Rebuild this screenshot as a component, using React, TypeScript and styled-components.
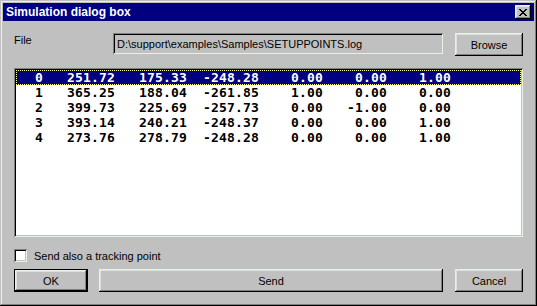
import styled, { createGlobalStyle, css } from 'styled-components'

const HL = '#e4f4e4'

const GlobalStyle = createGlobalStyle`
	html, body {
		margin: 0;
		padding: 0;
		background: #c0c0c0;
	}
	body {
		font-family: "Liberation Sans", Arial, sans-serif;
		font-size: 11px;
		color: #000;
	}
`

const raised = css`
	box-shadow: inset -1px -1px #000, inset 1px 1px ${HL}, inset -2px -2px #808080,
		inset 2px 2px #dfdfdf;
`

const sunken = css`
	box-shadow: inset 1px 1px #808080, inset -1px -1px ${HL}, inset 2px 2px #000,
		inset -2px -2px #c0c0c0;
`

const Window = styled.div`
	width: 537px;
	height: 306px;
	box-sizing: border-box;
	padding: 3px;
	background: #c0c0c0;
	display: flex;
	flex-direction: column;
	box-shadow: inset -1px -1px #000, inset 1px 1px #c0c0c0, inset -2px -2px #808080,
		inset 2px 2px ${HL};
`

const TitleBar = styled.div`
	height: 18px;
	background: #000080;
	display: flex;
	align-items: center;
	justify-content: space-between;
	padding: 0 3px;
`

const Title = styled.span`
	color: #fff;
	font-weight: bold;
	font-size: 12px;
`

const CloseButton = styled.div`
	width: 16px;
	height: 14px;
	background: #c0c0c0;
	display: flex;
	align-items: center;
	justify-content: center;
	${raised}
`

const Body = styled.div`
	flex: 1;
	display: flex;
	flex-direction: column;
	padding: 12px 11px 11px 11px;
`

const FileRow = styled.div`
	display: flex;
	align-items: flex-start;
	height: 23px;
`

const Label = styled.div`
	width: 99px;
	padding-top: 1px;
`

const TextBox = styled.div`
	width: 330px;
	height: 21px;
	box-sizing: border-box;
	padding: 0 4px;
	display: flex;
	align-items: center;
	background: #c0c0c0;
	white-space: nowrap;
	${sunken}
`

const Button = styled.div<{ $w: number; $default?: boolean }>`
	width: ${(p) => p.$w}px;
	height: 23px;
	box-sizing: border-box;
	display: flex;
	align-items: center;
	justify-content: center;
	background: #c0c0c0;
	${raised}
	${(p) =>
		p.$default &&
		css`
			box-shadow: inset 0 0 0 1px #000, inset -2px -2px #000, inset 2px 2px ${HL},
				inset -3px -3px #808080, inset 3px 3px #dfdfdf;
		`}
`

const Browse = styled(Button)`
	margin-left: 12px;
`

const ListBox = styled.div`
	margin-top: 12px;
	height: 169px;
	box-sizing: border-box;
	padding: 2px;
	background: #fff;
	${sunken}
`

const Row = styled.div<{ $selected?: boolean }>`
	display: flex;
	height: 15px;
	line-height: 15px;
	padding-left: 19px;
	font-family: "DejaVu Sans Mono", "Liberation Mono", monospace;
	font-weight: bold;
	font-size: 13px;
	letter-spacing: 0.17px;
	color: #000;
	${(p) =>
		p.$selected &&
		css`
			background: #000080;
			color: #fff;
			outline: 1px dotted #ffff90;
			outline-offset: -1px;
		`}
`

const Cell = styled.span<{ $w: number }>`
	width: ${(p) => p.$w}px;
	text-align: right;
	white-space: pre;
`

const CheckRow = styled.div`
	margin-top: 12px;
	height: 13px;
	display: flex;
	align-items: center;
	gap: 7px;
`

const CheckBox = styled.div`
	width: 13px;
	height: 13px;
	box-sizing: border-box;
	background: #fff;
	${sunken}
`

const ButtonRow = styled.div`
	margin-top: 7px;
	display: flex;
	gap: 11px;
`

const CancelButton = styled(Button)`
	margin-left: 1px;
`

const widths = [8, 72, 72, 72, 64, 64, 64]

const rows = [
	['0', '251.72', '175.33', '-248.28', '0.00', '0.00', '1.00'],
	['1', '365.25', '188.04', '-261.85', '1.00', '0.00', '0.00'],
	['2', '399.73', '225.69', '-257.73', '0.00', '-1.00', '0.00'],
	['3', '393.14', '240.21', '-248.37', '0.00', '0.00', '1.00'],
	['4', '273.76', '278.79', '-248.28', '0.00', '0.00', '1.00'],
]

export default function App() {
	return (
		<>
			<GlobalStyle />
			<Window>
				<TitleBar>
					<Title>Simulation dialog box</Title>
					<CloseButton>
						<svg width="8" height="7" viewBox="0 0 8 7" shapeRendering="crispEdges">
							<path
								d="M0 0h2v1h-2zM6 0h2v1h-2zM1 1h2v1h-2zM5 1h2v1h-2zM2 2h4v1h-4zM3 3h2v1h-2zM2 4h4v1h-4zM1 5h2v1h-2zM5 5h2v1h-2zM0 6h2v1h-2zM6 6h2v1h-2z"
								fill="#000"
							/>
						</svg>
					</CloseButton>
				</TitleBar>
				<Body>
					<FileRow>
						<Label>File</Label>
						<TextBox>D:\support\examples\Samples\SETUPPOINTS.log</TextBox>
						<Browse $w={68}>Browse</Browse>
					</FileRow>
					<ListBox>
						{rows.map((r, i) => (
							<Row key={i} $selected={i === 0}>
								{r.map((v, j) => (
									<Cell key={j} $w={widths[j]}>
										{v}
									</Cell>
								))}
							</Row>
						))}
					</ListBox>
					<CheckRow>
						<CheckBox />
						<span>Send also a tracking point</span>
					</CheckRow>
					<ButtonRow>
						<Button $w={74} $default>
							OK
						</Button>
						<Button $w={344}>Send</Button>
						<CancelButton $w={68}>Cancel</CancelButton>
					</ButtonRow>
				</Body>
			</Window>
		</>
	)
}
